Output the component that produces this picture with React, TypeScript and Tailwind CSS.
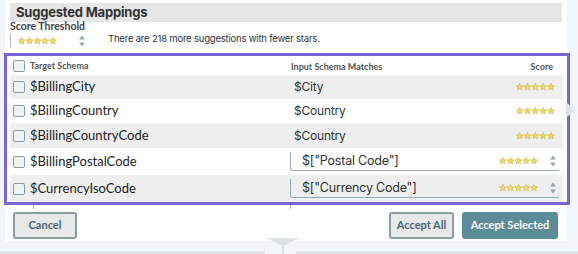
import React from "react";

const geo = { fontFamily: "Inter, 'Open Sans', sans-serif" };
const lato = { fontFamily: "Lato, 'Liberation Sans', sans-serif" };

function Star({ x }: { x: number }) {
  return (
    <polygon
      transform={`translate(${x},0)`}
      points="3.8,0.4 4.8,2.7 7.3,2.9 5.4,4.5 6,7 3.8,5.6 1.6,7 2.2,4.5 0.3,2.9 2.8,2.7"
      fill="#f2dc5d"
      stroke="#c8b24a"
      strokeWidth="0.6"
    />
  );
}

function Stars() {
  return (
    <svg width="39" height="8" viewBox="0 0 39 8" className="block">
      {[0, 7.8, 15.6, 23.4, 31.2].map((x) => (
        <Star key={x} x={x} />
      ))}
    </svg>
  );
}

function Spinner() {
  return (
    <svg width="6" height="12" viewBox="0 0 6 12" className="block">
      <polygon points="3,0.5 5.8,4.5 0.2,4.5" fill="#8fa3ad" />
      <polygon points="0.2,7.5 5.8,7.5 3,11.5" fill="#8fa3ad" />
    </svg>
  );
}

function Checkbox() {
  return (
    <div className="w-[12px] h-[12px] shrink-0 rounded-[2px] border border-[#8c9ba6] bg-[#eef3f6]" />
  );
}

type Row = { target: string; match: string; input?: boolean; gray: boolean; h: string };

const rows: Row[] = [
  { target: "$BillingCity", match: "$City", gray: true, h: "h-[24px]" },
  { target: "$BillingCountry", match: "$Country", gray: false, h: "h-[24px]" },
  { target: "$BillingCountryCode", match: "$Country", gray: true, h: "h-[25px]" },
  { target: "$BillingPostalCode", match: '$["Postal Code"]', input: true, gray: false, h: "h-[27px]" },
  { target: "$CurrencyIsoCode", match: '$["Currency Code"]', input: true, gray: true, h: "h-[27px]" },
];

export default function App() {
  return (
    <div className="relative w-[578px] h-[254px] overflow-hidden bg-[#f2f6f9]">
      {/* main panel */}
      <div className="ml-[5px] w-[562px] bg-white pt-[3px] pb-[2px] px-[5px]">
        <div
          className="h-[19px] bg-[#e6e6e6] pl-[6px] flex items-center text-[13px] font-bold text-[#333] tracking-[-0.2px]"
          style={geo}
        >
          Suggested Mappings
        </div>
        <div className="h-[10px] flex items-center text-[10.5px] font-bold text-[#444]" style={lato}>
          Score Threshold
        </div>
        <div className="h-[18px] flex items-center">
          <div className="h-[14px] border-l border-[#b4bec5] flex items-center pl-[7px]">
            <Stars />
            <div className="ml-[22px]">
              <Spinner />
            </div>
          </div>
          <div
            className="ml-[23px] self-start mt-[1px] leading-[12px] text-[9.5px] text-[#333] tracking-[-0.2px]"
            style={geo}
          >
            There are 218 more suggestions with fewer stars.
          </div>
        </div>

        {/* highlighted table */}
        <div className="mt-[3px] -ml-[6px] w-[566px] border-[3px] border-[#7866d4] pl-[3px] pr-[4px]">
          <div className="h-[19px] flex items-start pt-[3px]">
            <div className="w-[280px] flex items-center pl-[3px] gap-[5px]">
              <Checkbox />
              <span className="text-[9px] font-bold text-[#555]" style={lato}>
                Target Schema
              </span>
            </div>
            <div className="flex-1 flex items-center pl-[1px] pr-[10px] pt-[1px] justify-between text-[9px] font-bold text-[#555]" style={lato}>
              <span>Input Schema Matches</span>
              <span>Score</span>
            </div>
          </div>
          {rows.map((r) => (
            <div key={r.target} className={`${r.h} flex items-center ${r.gray ? "bg-[#efefef]" : "bg-white"}`}>
              <div className="w-[280px] flex items-center pl-[3px] gap-[5px]">
                <Checkbox />
                <span className="text-[13px] text-[#222]" style={lato}>
                  {r.target}
                </span>
              </div>
              {r.input ? (
                <div className="flex-1 pr-[4px]">
                  <div className="h-[19px] border-l border-b border-[#97adb8] rounded-bl-[3px] flex items-center pl-[11px] pr-[3px]">
                    <span className="flex-1 text-[12.5px] text-[#333] tracking-[-0.2px]" style={geo}>
                      {r.match}
                    </span>
                    <Stars />
                    <div className="ml-[12px]">
                      <Spinner />
                    </div>
                  </div>
                </div>
              ) : (
                <div className="flex-1 flex items-center pl-[4px] pr-[8px]">
                  <span className="flex-1 text-[12px] text-[#333] tracking-[-0.2px]" style={geo}>
                    {r.match}
                  </span>
                  <Stars />
                </div>
              )}
            </div>
          ))}
        </div>

        {/* buttons */}
        <div className="mt-[7px] h-[27px] flex items-center pl-[3px] pr-[4px]">
          <button
            className="w-[64px] h-[27px] rounded-[3px] border-2 border-[#8a9ca4] bg-[#e8e8e8] text-[11px] font-bold text-[#50646f]"
            style={lato}
          >
            Cancel
          </button>
          <div className="flex-1" />
          <button
            className="w-[65px] h-[27px] rounded-[3px] border-2 border-[#8a9ca4] bg-[#e8e8e8] text-[11px] font-bold text-[#50646f]"
            style={lato}
          >
            Accept All
          </button>
          <button
            className="ml-[8px] w-[96px] h-[27px] rounded-[3px] bg-[#5b8c98] text-[11px] font-bold text-white"
            style={lato}
          >
            Accept Selected
          </button>
        </div>
      </div>

      {/* bottom canvas */}
      <div className="mt-[10px] flex h-[10px]">
        <div className="w-[265px] bg-[#e5e5e5]" />
        <div className="w-[31px]" />
        <div className="flex-1 bg-[#e5e5e5]" />
      </div>

      {/* connector arrow under panel */}
      <svg className="absolute left-[266px] top-[238px]" width="34" height="16" viewBox="0 0 34 16">
        <polygon points="0,0 34,0 17,8" fill="#dde4e9" />
        <rect x="16" y="6" width="2" height="10" fill="#dde4e9" />
      </svg>
      {/* side chevron */}
      <svg className="absolute left-[566px] top-[102px]" width="10" height="16" viewBox="0 0 10 16">
        <polygon points="0,0 9,8 0,16" fill="#dfe5ea" />
      </svg>
      {/* small ticks below the highlight */}
      <div className="absolute left-[33px] top-[205px] w-[1px] h-[4px] bg-[#b8c2c8]" />
      <div className="absolute left-[290px] top-[205px] w-[1px] h-[4px] bg-[#b8c2c8]" />
    </div>
  );
}
